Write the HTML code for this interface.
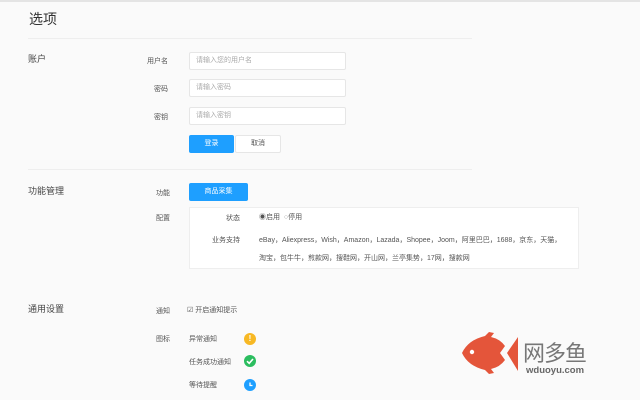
<!DOCTYPE html>
<html><head><meta charset="utf-8"><style>
*{margin:0;padding:0;box-sizing:border-box}
body{width:640px;height:400px;background:#fafafa;font-family:"Liberation Sans","Noto Sans CJK SC",sans-serif;color:#555;position:relative;overflow:hidden;font-size:7px}
.a{position:absolute;white-space:nowrap}
.lbl{position:absolute;width:40px;text-align:right;font-size:7px;color:#555}
.inp{position:absolute;left:189px;width:157px;height:18px;background:#fff;border:1px solid #e6e6e6;border-radius:2px;font-size:7px;color:#aaa;padding-left:6px;line-height:16px}
.sec{position:absolute;left:28px;font-size:9px;color:#444}
.hr{position:absolute;left:28px;width:444px;height:1px;background:#eee}
.btn{position:absolute;height:18px;border-radius:2px;font-size:7px;text-align:center;line-height:18px}
.dot{position:absolute;width:12px;height:12px;border-radius:50%}
</style></head><body>
<div class="a" style="left:0;top:0;width:640px;height:2px;background:#e4e4e4"></div>
<div class="a" style="left:29px;top:9px;font-size:14px;color:#333">选项</div>
<div class="hr" style="top:38px"></div>

<div class="sec" style="top:52px">账户</div>
<div class="lbl" style="left:128px;top:56px">用户名</div>
<div class="inp" style="top:52px">请输入您的用户名</div>
<div class="lbl" style="left:128px;top:84px">密码</div>
<div class="inp" style="top:79px">请输入密码</div>
<div class="lbl" style="left:128px;top:112px">密钥</div>
<div class="inp" style="top:107px">请输入密钥</div>
<div class="btn" style="left:189px;top:135px;width:45px;background:#1e9fff;color:#fff">登录</div>
<div class="btn" style="left:235px;top:135px;width:46px;background:#fff;border:1px solid #e6e6e6;line-height:16px;color:#555">取消</div>
<div class="hr" style="top:169px"></div>

<div class="sec" style="top:184px">功能管理</div>
<div class="lbl" style="left:130px;top:188px">功能</div>
<div class="btn" style="left:189px;top:183px;width:59px;background:#1e9fff;color:#fff">商品采集</div>
<div class="lbl" style="left:130px;top:213px">配置</div>
<div class="a" style="left:189px;top:207px;width:390px;height:62px;background:#fff;border:1px solid #eee"></div>
<div class="lbl" style="left:200px;top:213px">状态</div>
<div class="a" style="left:259px;top:212px;font-size:7px">◉启用 &nbsp;<span style="color:#999">○</span>停用</div>
<div class="lbl" style="left:200px;top:235px">业务支持</div>
<div class="a" style="left:259px;top:235px">eBay，Aliexpress，Wish，Amazon，Lazada，Shopee，Joom，阿里巴巴，1688，京东，天猫，</div>
<div class="a" style="left:259px;top:253px">淘宝，包牛牛，煎款网，搜鞋网，开山网，兰亭集势，17网，搜款网</div>

<div class="sec" style="top:302px">通用设置</div>
<div class="lbl" style="left:130px;top:306px">通知</div>
<div class="a" style="left:187px;top:305px">☑ 开启通知提示</div>
<div class="lbl" style="left:130px;top:334px">图标</div>
<div class="a" style="left:189px;top:334px">异常通知</div>
<div class="dot" style="left:244px;top:333px;background:#f7b824;color:#fff;font-size:8px;text-align:center;line-height:12px;font-weight:bold">!</div>
<div class="a" style="left:189px;top:357px">任务成功通知</div>
<div class="dot" style="left:244px;top:355px;background:#2bbd5f"><svg width="12" height="12"><path d="M3 6.2L5.2 8.3 9 4" stroke="#fff" stroke-width="1.6" fill="none"/></svg></div>
<div class="a" style="left:189px;top:380px">等待提醒</div>
<div class="dot" style="left:244px;top:379px;background:#1e9fff"><svg width="12" height="12"><path d="M6 3.5V6.5H8.5" stroke="#fff" stroke-width="1.3" fill="none"/></svg></div>

<svg class="a" style="left:455px;top:325px" width="70" height="60" viewBox="455 325 70 60">
<path d="M462 353 Q468 340 485 336 L489 332 L494 333 L491 337 Q500 339 505 346 L500 353 L505 360 Q500 367 491 369 L494 373 L489 374 L485 370 Q468 366 462 353Z" fill="#e4553a"/>
<path d="M507 353 L518 337 L518 371Z" fill="#e4553a"/>
<circle cx="472" cy="352" r="2.2" fill="#fff"/>
</svg>
<div class="a" style="left:523px;top:336px;font-size:22px;color:#777;letter-spacing:-1px">网多鱼</div>
<div class="a" style="left:526px;top:365px;font-size:9.5px;color:#666;font-weight:bold">wduoyu.com</div>
</body></html>
